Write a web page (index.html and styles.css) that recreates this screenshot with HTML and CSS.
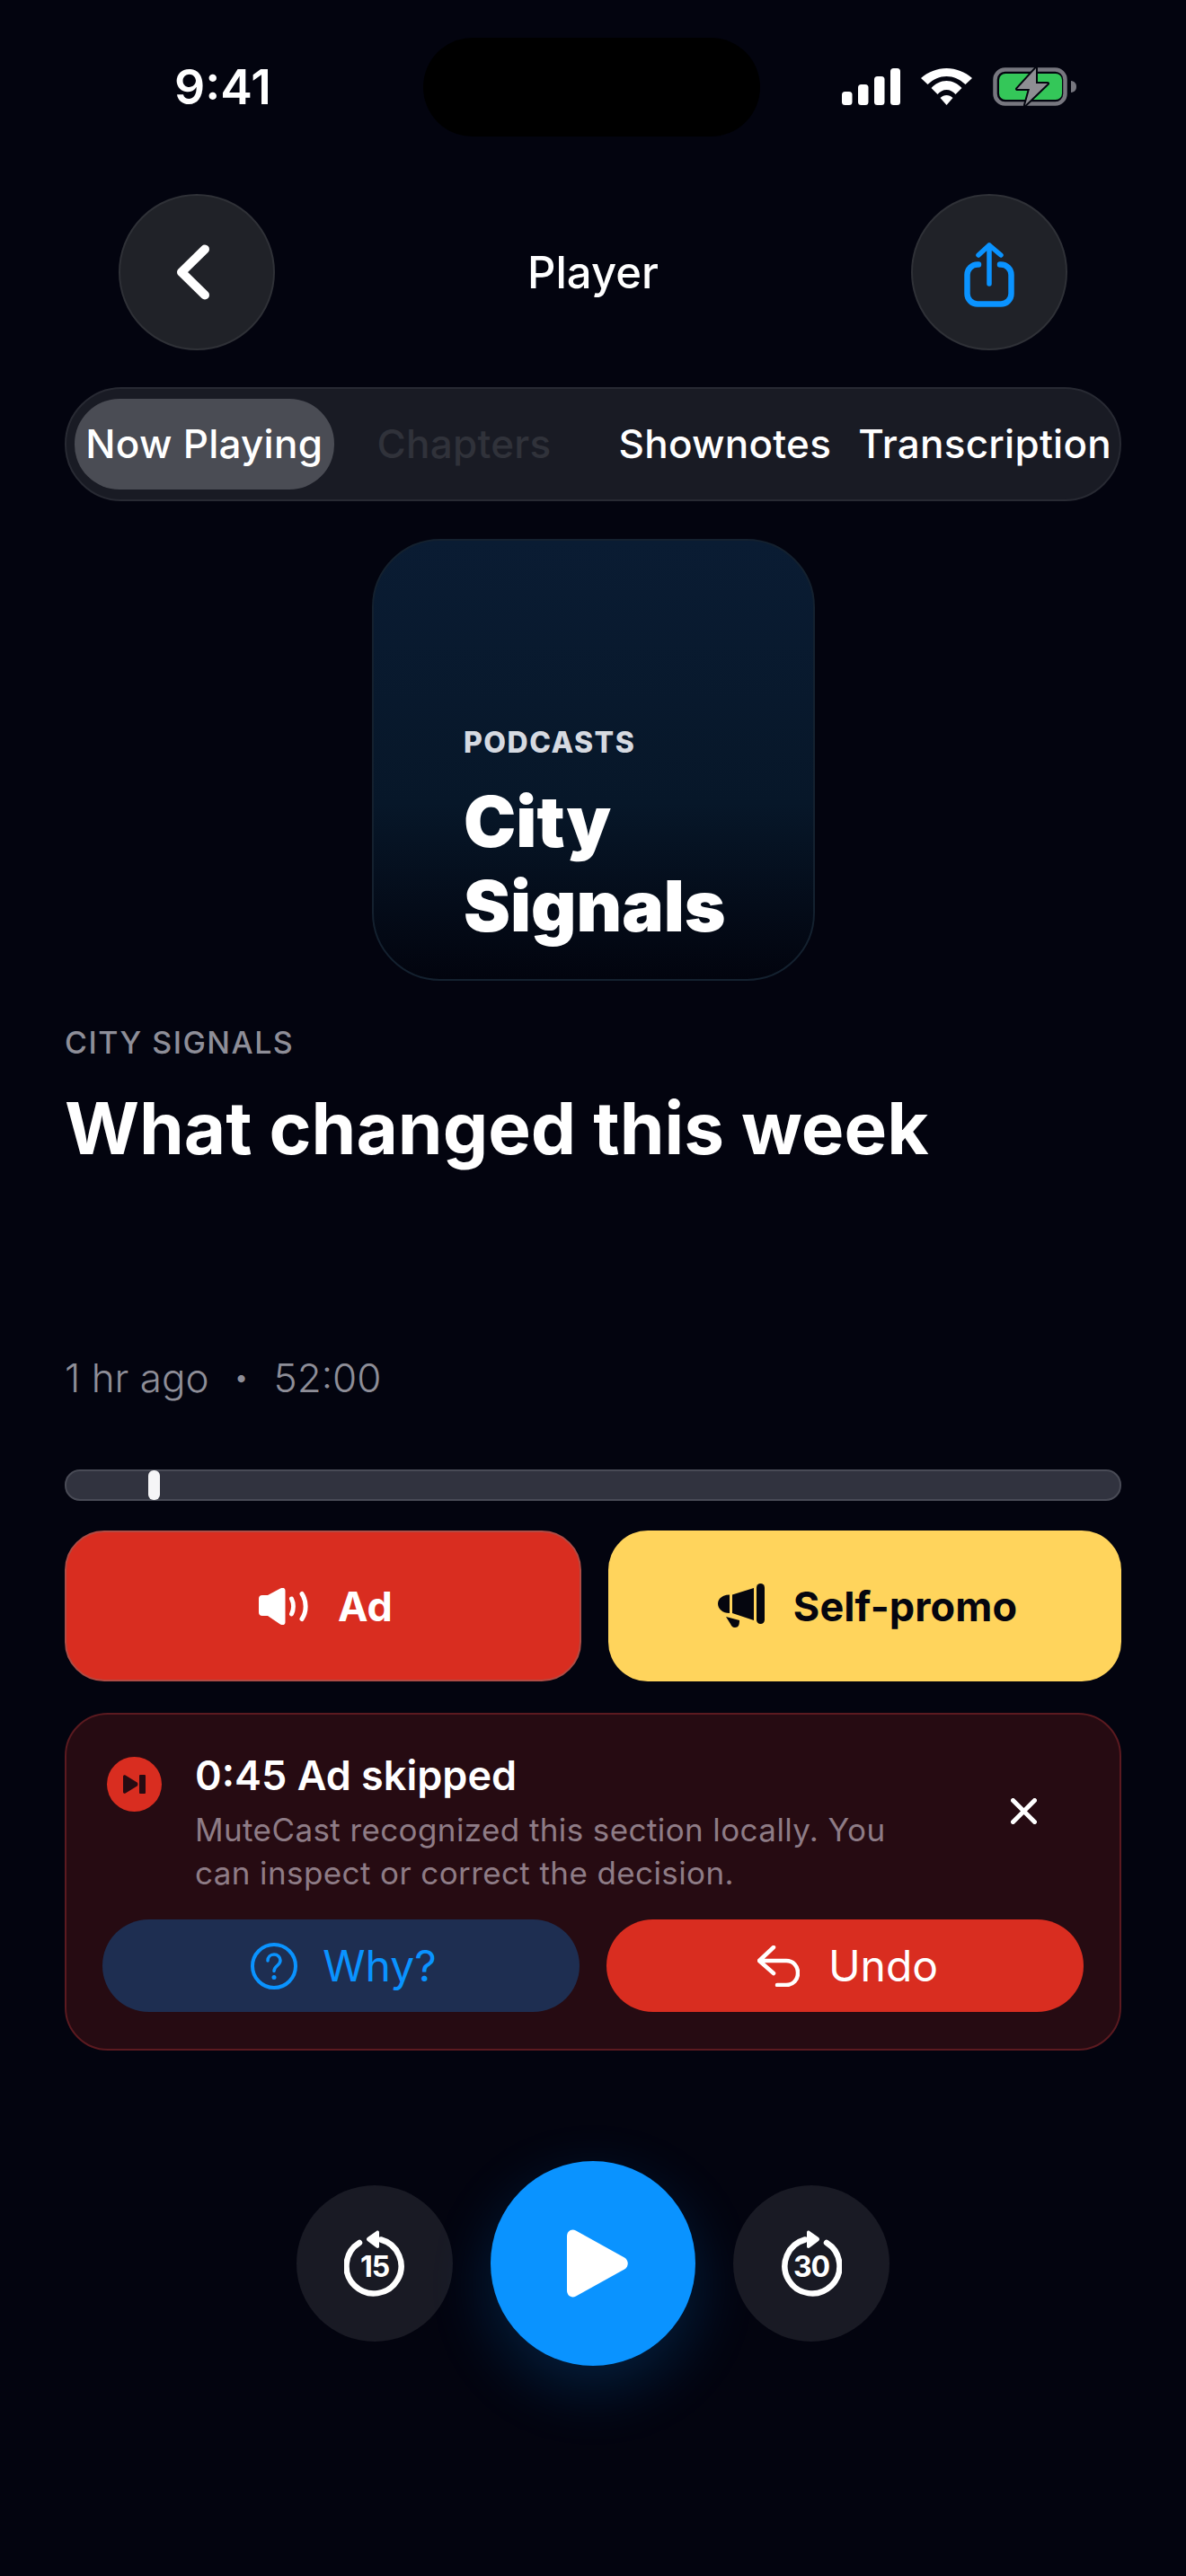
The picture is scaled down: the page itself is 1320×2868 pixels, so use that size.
FILE: index.html
```html
<!DOCTYPE html>
<html lang="en">
<head>
  <meta charset="UTF-8">
  <meta name="viewport" content="width=device-width, initial-scale=1.0">
  <title>Player</title>
  <link rel="stylesheet" href="styles.css">
</head>
<body>
  <div class="screen">

    <!-- Status bar -->
    <div class="status-bar">
      <div class="clock">9:41</div>
      <div class="island"></div>
      <div class="status-icons">
        <svg width="65" height="41" viewBox="0 0 65 41"><g fill="#fff"><rect x="0" y="26" width="11.5" height="15" rx="3.5"/><rect x="18" y="18" width="11.5" height="23" rx="3.5"/><rect x="36" y="9" width="11.5" height="32" rx="3.5"/><rect x="54" y="0" width="11" height="41" rx="3.5"/></g></svg>
        <svg width="57" height="41" viewBox="0 0 57 41"><g fill="#fff"><path d="M0 11C8 4 18 0 28.5 0S49 4 57 11L49.5 18C43 12 36 9 28.5 9S14 12 7.5 18z"/><path d="M11.5 22C16 17 22 14 28.5 14S41 17 45.5 22L38.5 29C36 26 32.5 24 28.5 24S21 26 18.5 29z"/><path d="M21.5 33C23.5 31 26 30 28.5 30S33.5 31 35.5 33L28.5 41z"/></g></svg>
        <svg width="94" height="43" viewBox="0 0 94 43">
          <rect x="2.5" y="2.5" width="78" height="38" rx="11" fill="none" stroke="#77777f" stroke-width="4.5"/>
          <rect x="7" y="7" width="70" height="29" rx="7" fill="#34c759"/>
          <path d="M87 15c4 .5 6 3 6 6.5s-2 6-6 6.5z" fill="#77777f"/>
          <path d="M48 1 27 24h14l-5 18 25-24H48z" fill="#8e8e93" stroke="#04060f" stroke-width="4" stroke-linejoin="round" paint-order="stroke"/>
        </svg>
      </div>
    </div>

    <!-- Nav -->
    <div class="nav">
      <button class="round-btn">
        <svg class="back-icon" width="40" height="64" viewBox="0 0 40 64"><path d="M33 6.5 7 32l26 25.5" fill="none" stroke="#fff" stroke-width="10" stroke-linecap="round" stroke-linejoin="round"/></svg>
      </button>
      <div class="nav-title">Player</div>
      <button class="round-btn">
        <svg width="60" height="80" viewBox="0 0 60 80"><g fill="none" stroke="#0a93ff" stroke-linecap="round" stroke-linejoin="round"><path d="M18 31.5H17A11.5 11.5 0 0 0 5.5 43v21A11.5 11.5 0 0 0 17 75.5h26A11.5 11.5 0 0 0 54.5 64V43A11.5 11.5 0 0 0 43 31.5H42" stroke-width="6.5"/><path d="M30 53V10M18 21 30 10l13 11" stroke-width="5.5"/></g></svg>
      </button>
    </div>

    <!-- Tabs -->
    <div class="tabs">
      <div class="tab tab-active">Now Playing</div>
      <div class="tab tab-dim">Chapters</div>
      <div class="tab tab-notes">Shownotes</div>
      <div class="tab tab-trans">Transcription</div>
    </div>

    <!-- Artwork -->
    <div class="artwork-wrap">
      <div class="artwork">
        <div class="artwork-label">PODCASTS</div>
        <div class="artwork-title">City<br>Signals</div>
      </div>
    </div>

    <div class="show-name">CITY SIGNALS</div>
    <h1 class="episode-title">What changed this week</h1>
    <div class="episode-meta"><span>1 hr ago</span><span class="meta-dot">•</span><span>52:00</span></div>

    <!-- Progress -->
    <div class="progress"><div class="progress-thumb"></div></div>

    <!-- Segment buttons -->
    <div class="segments">
      <div class="segment segment-ad">
        <svg width="56" height="41" viewBox="0 0 56 41"><path d="M0 12a4 4 0 0 1 4-4h6L24 .5C27 -1 29.5 0 29.5 3v35c0 3-2.5 4-5.5 2.5L10 31H4a4 4 0 0 1-4-4z" fill="#fff"/><path d="M36.5 12c2.5 5 2.5 12 0 17M48 6.5c5.500 8 5.500 20 0 28" fill="none" stroke="#fff" stroke-width="5" stroke-linecap="round"/></svg>
        <span>Ad</span>
      </div>
      <div class="segment segment-promo">
        <svg width="52" height="50" viewBox="0 0 52 50"><g fill="#05060f"><path d="M13 12.5V33C5 33 0 28 0 22.5S5 12.5 13 12.5z"/><path d="M16 12.5 40 5v36l-24-8z"/><rect x="43" y="0" width="9" height="45" rx="4.5"/><path d="M9 37l15 4c0 5-1 8-5 8-3 0-4-2-5-4z"/></g></svg>
        <span>Self-promo</span>
      </div>
    </div>

    <!-- Skip card -->
    <div class="skip-card">
      <div class="skip-top">
        <div class="skip-badge">
          <svg width="25" height="21" viewBox="0 0 25 21"><path d="M0 2C0 .4 1.4-.2 2.6 .5l13 8c1 .6 1 3.4 0 4l-13 8C1.4 21.2 0 20.6 0 19z" fill="#260b12"/><rect x="18" y="0" width="7" height="21" rx="1" fill="#260b12"/></svg>
        </div>
        <div class="skip-text">
          <div class="skip-title">0:45 Ad skipped</div>
          <div class="skip-desc">MuteCast recognized this section locally. You can inspect or correct the decision.</div>
        </div>
        <svg class="skip-close" width="29" height="29" viewBox="0 0 29 29"><path d="M2.5 2.5l24 24M26.5 2.5l-24 24" fill="none" stroke="#fff" stroke-width="5" stroke-linecap="round"/></svg>
      </div>
      <div class="skip-actions">
        <div class="pill pill-why">
          <svg width="52" height="52" viewBox="0 0 52 52"><circle cx="26" cy="26" r="24" fill="none" stroke="#0a93ff" stroke-width="4"/><path d="M19 20c0-4 3-7 7-7s7 3 7 6.5c0 6-7 6-7 12" fill="none" stroke="#0a93ff" stroke-width="3.5" stroke-linecap="round"/><circle cx="26" cy="38.5" r="2.5" fill="#0a93ff"/></svg>
          <span>Why?</span>
        </div>
        <div class="pill pill-undo">
          <svg width="47" height="46" viewBox="0 0 47 46"><path d="M18 2 2 17l16 14M2.5 17H32c8 0 13 6 13 13.5S40 44 32 44H22" fill="none" stroke="#fff" stroke-width="4.5" stroke-linecap="round" stroke-linejoin="round"/></svg>
          <span>Undo</span>
        </div>
      </div>
    </div>

    <!-- Transport -->
    <div class="transport">
      <button class="skip-btn">
        <svg width="68" height="74" viewBox="0 0 68 74"><path d="M17 14A30.5 30.5 0 1 0 41 10.5" fill="none" stroke="#fff" stroke-width="6.5" stroke-linecap="round"/><path d="M36 1c1.2-1 3-.4 3 1.2v16c0 1.6-1.8 2.2-3 1.2L26 12c-1.4-1-1.4-3 0-4z" fill="#fff"/><text x="34" y="52" class="skip-num">15</text></svg>
      </button>
      <button class="play-btn">
        <svg width="68" height="76" viewBox="0 0 68 76"><path d="M0 8C0 2 5-1 10 1.5l54 30c5 3 5 10 0 13L10 74.500C5 77 0 74 0 68z" fill="#fff"/></svg>
      </button>
      <button class="skip-btn">
        <svg width="68" height="74" viewBox="0 0 68 74"><path d="M51 14A30.5 30.5 0 1 1 27 10.5" fill="none" stroke="#fff" stroke-width="6.5" stroke-linecap="round"/><path d="M32 1c-1.2-1-3-.4-3 1.2v16c0 1.6 1.8 2.2 3 1.2L42 12c1.4-1 1.4-3 0-4z" fill="#fff"/><text x="34" y="52" class="skip-num">30</text></svg>
      </button>
    </div>

  </div>
</body>
</html>
```

FILE: styles.css
```css
* {
  box-sizing: border-box;
}
html, body {
  margin: 0;
  padding: 0;
  background: #03040f;
}
body {
  font-family: Inter, "Noto Sans", sans-serif;
  color: #fff;
}
button {
  padding: 0;
  border: none;
  font: inherit;
}
.screen {
  width: 1320px;
  height: 2868px;
  padding: 0 72px;
  overflow: hidden;
}

/* status bar */
.status-bar {
  display: flex;
  align-items: center;
  height: 152px;
  margin: 0 -72px;
  padding: 41px 0 0 194px;
}
.clock {
  width: 277px;
  font-size: 53.5px;
  font-weight: 600;
}
.island {
  width: 375px;
  height: 110px;
  border-radius: 55px;
  background: #000;
}
.status-icons {
  display: flex;
  align-items: center;
  gap: 23px;
  margin-left: 91px;
}

/* nav */
.nav {
  display: flex;
  align-items: center;
  justify-content: space-between;
  height: 174px;
  margin: 64px 60px 0;
}
.round-btn {
  display: flex;
  align-items: center;
  justify-content: center;
  width: 174px;
  height: 174px;
  border: 2px solid #2f3137;
  border-radius: 50%;
  background: #202228;
}
.back-icon {
  margin-right: 9px;
}
.nav-title {
  font-size: 49px;
  font-weight: 500;
}

/* tabs */
.tabs {
  display: flex;
  align-items: center;
  height: 127px;
  margin-top: 41px;
  padding: 0 9px;
  border: 2px solid #282a33;
  border-radius: 64px;
  background: #191b24;
}
.tab {
  height: 101px;
  line-height: 100px;
  font-size: 44px;
  font-weight: 500;
  letter-spacing: 0.25px;
  white-space: nowrap;
}
.tab-active {
  width: 289px;
  border-radius: 50px;
  background: #4a4c54;
  text-align: center;
}
.tab-dim {
  margin-left: 48px;
  color: #30323a;
}
.tab-notes {
  margin-left: 75px;
}
.tab-trans {
  margin-left: 30px;
}

/* artwork */
.artwork-wrap {
  display: flex;
  justify-content: center;
  margin-top: 42px;
}
.artwork {
  display: flex;
  flex-direction: column;
  justify-content: flex-end;
  width: 493px;
  height: 492px;
  margin-left: 1px;
  padding: 0 0 34px 100px;
  border: 2px solid #14212f;
  border-radius: 76px;
  background: linear-gradient(180deg, #0a1c33 0%, #071729 60%, #02040e 100%);
}
.artwork-label {
  font-size: 32px;
  font-weight: 800;
  letter-spacing: 1.5px;
  color: #d6dae1;
}
.artwork-title {
  margin-top: 22px;
  font-size: 78px;
  font-weight: 900;
  line-height: 94px;
}

/* episode info */
.show-name {
  margin-top: 48px;
  font-size: 34px;
  font-weight: 500;
  letter-spacing: 1.5px;
  color: #8e8e98;
}
.episode-title {
  margin: 27px 0 0;
  font-size: 80px;
  font-weight: 700;
  line-height: 96px;
}
.episode-meta {
  display: flex;
  align-items: center;
  margin-top: 200px;
  font-size: 44px;
  font-weight: 300;
  line-height: 60px;
  color: #8e8e98;
}
.meta-dot {
  width: 72px;
  font-size: 26px;
  font-weight: 400;
  text-align: center;
}

/* progress */
.progress {
  height: 35px;
  margin-top: 72px;
  padding-left: 91px;
  border: 2px solid #494b56;
  border-radius: 17px;
  background: #31333f;
}
.progress-thumb {
  width: 13px;
  height: 33px;
  margin-top: -1px;
  border-radius: 6px;
  background: #f5f5f7;
}

/* segments */
.segments {
  display: flex;
  gap: 30px;
  margin-top: 33px;
}
.segment {
  display: flex;
  flex: 1;
  align-items: center;
  justify-content: center;
  gap: 32px;
  height: 168px;
  padding-left: 6px;
  border-radius: 44px;
  font-size: 45px;
  font-weight: 700;
  letter-spacing: 0.1px;
}
.segment-ad {
  border: 2px solid #b04b44;
  background: #d92d20;
}
.segment-promo {
  background: #ffd45c;
  color: #05060f;
}

/* skip card */
.skip-card {
  height: 376px;
  margin-top: 35px;
  padding: 40px 40px 41px;
  border: 2px solid #5b1a20;
  border-radius: 48px;
  background: #260b12;
}
.skip-top {
  display: flex;
  align-items: flex-start;
  height: 188px;
}
.skip-badge {
  display: flex;
  align-items: center;
  justify-content: center;
  flex-shrink: 0;
  width: 61px;
  height: 61px;
  margin: 7px 0 0 5px;
  border-radius: 50%;
  background: #d92d20;
}
.skip-text {
  width: 800px;
  margin-left: 37px;
}
.skip-title {
  font-size: 45px;
  font-weight: 600;
  line-height: 56px;
}
.skip-desc {
  margin-top: 8px;
  font-size: 35px;
  line-height: 48px;
  letter-spacing: 0.4px;
  color: #8e7c86;
}
.skip-close {
  margin: 53px 0 0 108px;
}
.skip-actions {
  display: flex;
  gap: 30px;
}
.pill {
  display: flex;
  flex: 1;
  align-items: center;
  justify-content: center;
  gap: 32px;
  height: 103px;
  padding-left: 6px;
  border-radius: 52px;
  font-size: 48px;
}
.pill-why {
  gap: 28px;
  background: #1e2e51;
  color: #0a93ff;
}
.pill-undo {
  background: #d92d20;
}

/* transport */
.transport {
  display: flex;
  align-items: center;
  justify-content: center;
  gap: 42px;
  margin-top: 123px;
}
.skip-btn {
  display: flex;
  align-items: center;
  justify-content: center;
  width: 174px;
  height: 174px;
  border-radius: 50%;
  background: #191a24;
}
.skip-num {
  fill: #fff;
  font-family: Inter, sans-serif;
  font-size: 32px;
  font-weight: 700;
  letter-spacing: -1px;
  text-anchor: middle;
}
.play-btn {
  display: flex;
  align-items: center;
  justify-content: center;
  width: 228px;
  height: 228px;
  padding-left: 9px;
  border-radius: 50%;
  background: #0a93ff;
  box-shadow: 0 24px 70px rgba(10, 147, 255, 0.2);
}
```
